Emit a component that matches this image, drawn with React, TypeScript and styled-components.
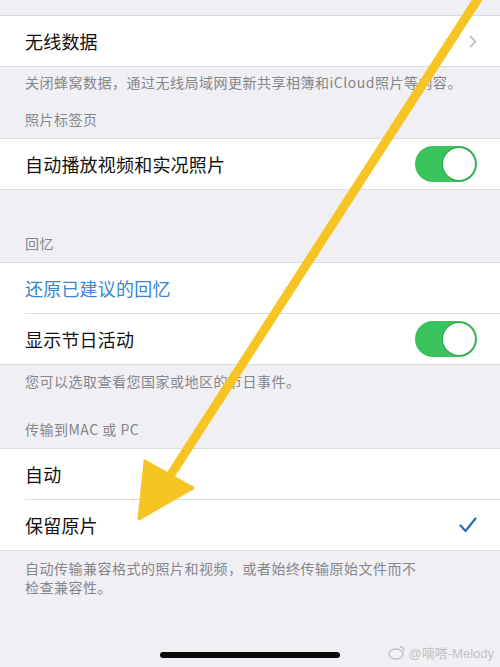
import styled, { createGlobalStyle } from 'styled-components';

const GlobalStyle = createGlobalStyle`
  html, body {
    margin: 0;
    padding: 0;
    background: #efeff4;
  }
  body {
    font-family: "Noto Sans CJK SC", "Noto Sans", sans-serif;
  }
`;

const Screen = styled.div`
  position: relative;
  width: 500px;
  height: 667px;
  overflow: hidden;
  display: flex;
  flex-direction: column;
  padding-top: 15px;
  box-sizing: border-box;
  background: #efeff4;
`;

const Group = styled.div`
  background: #ffffff;
  border-top: 1px solid #dcdce0;
  border-bottom: 1px solid #dcdce0;
  display: flex;
  flex-direction: column;
`;

const Row = styled.div<{ divider?: boolean }>`
  height: 50px;
  display: flex;
  align-items: center;
  justify-content: space-between;
  margin-left: 25px;
  padding-right: 23px;
  border-top: ${(p) => (p.divider ? '1px solid #dcdce0' : 'none')};
`;

const Label = styled.span<{ link?: boolean }>`
  font-size: 18px;
  line-height: 24px;
  letter-spacing: 0.2px;
  color: ${(p) => (p.link ? '#3a86c8' : '#111111')};
`;

const Footer = styled.div<{ top: number; width?: number }>`
  padding: ${(p) => p.top}px 0 0 25px;
  max-width: ${(p) => (p.width ? `${p.width}px` : 'none')};
  font-size: 14px;
  line-height: 19px;
  letter-spacing: 0.5px;
  color: #86868b;
`;

const SectionHeader = styled.div<{ top: number }>`
  padding: ${(p) => p.top}px 0 10px 25px;
  font-size: 14px;
  line-height: 18px;
  letter-spacing: 0.5px;
  color: #86868b;
`;

const Toggle = styled.div`
  width: 62px;
  height: 36px;
  border-radius: 18px;
  background: #3ac35c;
  display: flex;
  align-items: center;
  justify-content: flex-end;
  padding: 2px;
  box-sizing: border-box;
`;

const Knob = styled.div`
  width: 32px;
  height: 32px;
  border-radius: 50%;
  background: #ffffff;
  box-shadow: 0 0 0 1px rgba(40, 120, 60, 0.5);
`;

const HomeBar = styled.div`
  margin: auto auto 9px;
  width: 180px;
  height: 6px;
  border-radius: 3px;
  background: #0a0a0a;
`;

const Watermark = styled.div`
  position: absolute;
  right: 6px;
  bottom: 5px;
  display: flex;
  align-items: center;
  gap: 3px;
  font-family: "Liberation Sans", "Noto Sans CJK SC", sans-serif;
  font-size: 13px;
  color: rgba(150, 150, 155, 0.55);
`;

const Overlay = styled.svg`
  position: absolute;
  left: 0;
  top: 0;
  pointer-events: none;
`;

const Chevron = () => (
  <svg width="8" height="13" viewBox="0 0 8 13">
    <path d="M1.5 1.5 L6.5 6.5 L1.5 11.5" fill="none" stroke="#c4c4c9" strokeWidth="1.8" strokeLinecap="round" strokeLinejoin="round" />
  </svg>
);

const Check = () => (
  <svg width="18" height="16" viewBox="0 0 18 16">
    <path d="M1.5 8.5 L6.5 14 L16.5 1.5" fill="none" stroke="#2a6db5" strokeWidth="2.2" strokeLinecap="round" strokeLinejoin="round" />
  </svg>
);

const Switch = () => (
  <Toggle>
    <Knob />
  </Toggle>
);

const App = () => {
  return (
    <>
      <GlobalStyle />
      <Screen>
        <Group>
          <Row>
            <Label>无线数据</Label>
            <Chevron />
          </Row>
        </Group>
        <Footer top={6}>关闭蜂窝数据，通过无线局域网更新共享相簿和iCloud照片等内容。</Footer>

        <SectionHeader top={18}>照片标签页</SectionHeader>
        <Group>
          <Row>
            <Label>自动播放视频和实况照片</Label>
            <Switch />
          </Row>
        </Group>

        <SectionHeader top={44}>回忆</SectionHeader>
        <Group>
          <Row>
            <Label link>还原已建议的回忆</Label>
          </Row>
          <Row divider>
            <Label>显示节日活动</Label>
            <Switch />
          </Row>
        </Group>
        <Footer top={7}>您可以选取查看您国家或地区的节日事件。</Footer>

        <SectionHeader top={29}>传输到MAC 或 PC</SectionHeader>
        <Group>
          <Row>
            <Label>自动</Label>
          </Row>
          <Row divider>
            <Label>保留原片</Label>
            <Check />
          </Row>
        </Group>
        <Footer top={8} width={400}>自动传输兼容格式的照片和视频，或者始终传输原始文件而不检查兼容性。</Footer>

        <HomeBar />

        <Watermark>
          <svg width="18" height="15" viewBox="0 0 18 15">
            <ellipse cx="8" cy="9" rx="7" ry="5" fill="none" stroke="currentColor" strokeWidth="1.4" />
            <path d="M12 2 Q16 2 16 6" fill="none" stroke="currentColor" strokeWidth="1.4" />
          </svg>
          <span>@嘀嗒-Melody</span>
        </Watermark>

        <Overlay width="500" height="667" viewBox="0 0 500 667">
          <line x1="481" y1="-6" x2="170" y2="476" stroke="#f6c523" strokeWidth="9" strokeLinecap="round" />
          <polygon points="145,461 193,488 139,519" fill="#f6c523" stroke="#f6c523" strokeWidth="3" strokeLinejoin="round" />
        </Overlay>
      </Screen>
    </>
  );
};

export default App;
